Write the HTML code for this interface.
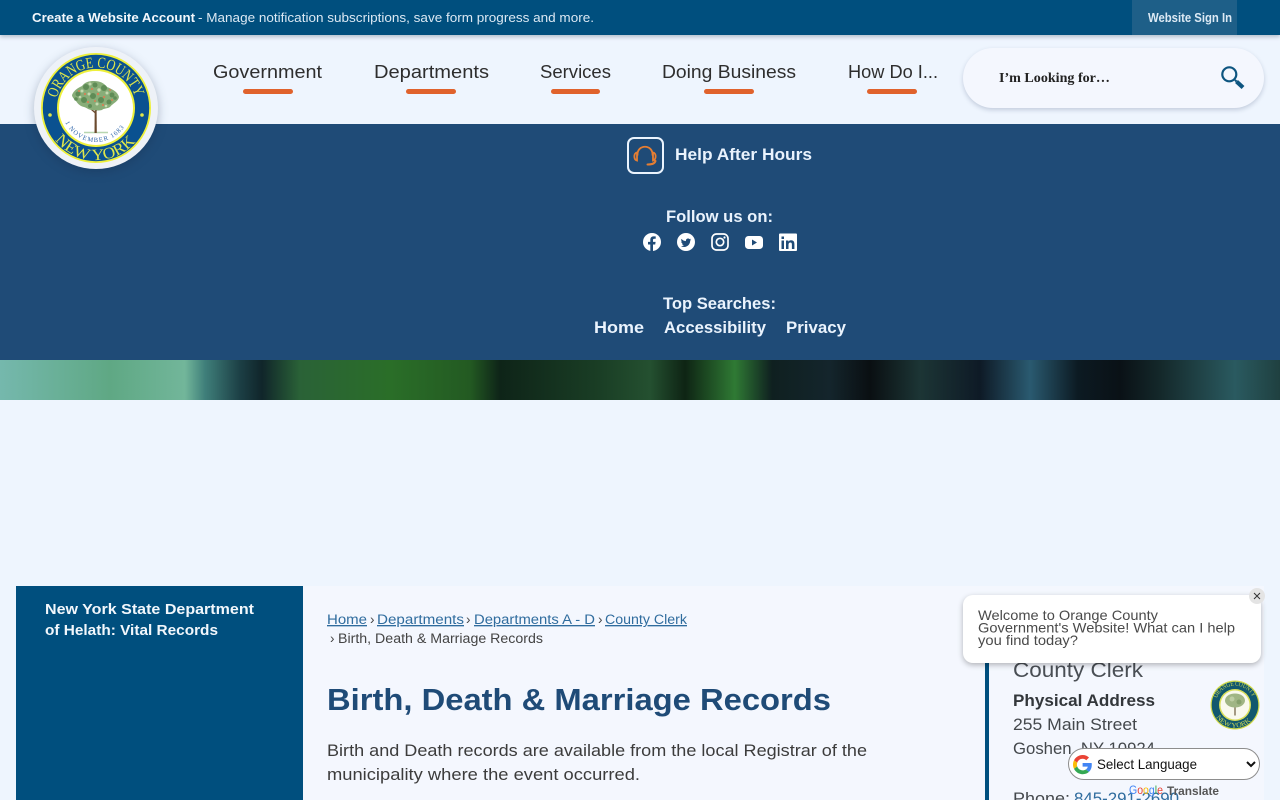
<!DOCTYPE html>
<html lang="en"><head><meta charset="utf-8"><title>Birth, Death &amp; Marriage Records</title>
<style>
html,body{margin:0;padding:0;width:1280px;height:800px;overflow:hidden;background:#eef5fe;font-family:"Liberation Sans",sans-serif}
.b{position:absolute}
svg{position:absolute;left:0;top:0}
text{font-family:"Liberation Sans",sans-serif}
</style></head><body>
<div class="b" style="left:0;top:124px;width:1280px;height:236px;background:#1f4b77"></div>
<div class="b" style="left:0;top:360px;width:1280px;height:40px;background:linear-gradient(90deg,#75b8ad 0,#5fa884 110px,#72b69a 185px,#3f7f7a 205px,#1c3f45 240px,#10252a 262px,#2a6237 300px,#2a6e28 390px,#235a22 470px,#0e2418 500px,#1a3e25 600px,#245030 650px,#0e2414 685px,#2f7a34 735px,#0f2020 772px,#14252c 830px,#0a0f12 870px,#1c3535 920px,#0e1a26 980px,#2a5a70 1030px,#0c1a22 1078px,#0a1116 1120px,#14282a 1160px,#2a5a60 1235px,#1f4040 1280px)"></div>
<div class="b" style="left:0;top:0;width:1280px;height:35px;background:#004f7e;box-shadow:0 2px 4px rgba(0,30,60,.25)"></div>
<div class="b" style="left:1132px;top:0;width:105px;height:35px;background:#1e5f88"></div>
<div class="b" style="left:963px;top:48px;width:301px;height:60px;border-radius:30px;background:#f4f7fe;box-shadow:0 2px 5px rgba(40,60,100,.22)"></div>
<div class="b" style="left:16px;top:586px;width:287px;height:214px;background:#004f7e"></div>
<div class="b" style="left:303px;top:586px;width:961px;height:214px;background:#f4f7fe"></div>
<div class="b" style="left:985px;top:640px;width:4px;height:160px;background:#004f7e"></div>

<svg width="1280" height="800" viewBox="0 0 1280 800">
<defs>
<path id="arcT" d="M56.700 98.200 A40.500 40.500 0 0 1 135.300 98.200"/>
<path id="arcB" d="M55 140 A52 52 0 0 0 137 140"/>
<path id="arcM" d="M65.200 122.400 A34 34 0 0 0 126.800 122.400"/>
<path id="arcS" d="M1217 698 A19.300 19.300 0 0 1 1253 698"/>
<path id="arcSB" d="M1216.100 717.300 A22.500 22.500 0 0 0 1253.900 717.300"/>
</defs>
<text x="32" y="22" font-size="13" font-weight="700" fill="#f2f7fc" textLength="163" lengthAdjust="spacingAndGlyphs">Create a Website Account</text>
<text x="198" y="22" font-size="13" fill="#dbe8f3" textLength="396" lengthAdjust="spacingAndGlyphs">- Manage notification subscriptions, save form progress and more.</text>
<text x="1148" y="22" font-size="13" font-weight="700" fill="#dce9f4" textLength="84" lengthAdjust="spacingAndGlyphs">Website Sign In</text>

<g font-size="18" fill="#2e2e2e">
<text x="213" y="78" textLength="109" lengthAdjust="spacingAndGlyphs">Government</text>
<text x="374" y="78" textLength="115" lengthAdjust="spacingAndGlyphs">Departments</text>
<text x="540" y="78" textLength="71" lengthAdjust="spacingAndGlyphs">Services</text>
<text x="662" y="78" textLength="134" lengthAdjust="spacingAndGlyphs">Doing Business</text>
<text x="848" y="78" textLength="90" lengthAdjust="spacingAndGlyphs">How Do I...</text>
</g>
<g fill="#e0622c">
<rect x="243" y="89" width="50" height="5" rx="2.500"/><rect x="406" y="89" width="50" height="5" rx="2.500"/><rect x="551" y="89" width="49" height="5" rx="2.500"/><rect x="704" y="89" width="50" height="5" rx="2.500"/><rect x="867" y="89" width="50" height="5" rx="2.500"/>
</g>
<text x="999" y="82" font-size="14" font-weight="700" fill="#222" style="font-family:'Liberation Serif',serif" textLength="111" lengthAdjust="spacingAndGlyphs">I’m Looking for…</text>
<g fill="none" stroke="#0d5580"><circle cx="1229.300" cy="74.300" r="7" stroke-width="2.200"/><path d="M1235 80l1.500 1.500" stroke-width="2"/><path d="M1236.500 81.500l6.500 6" stroke-width="4.200"/></g>

<!-- seal -->
<g style="filter:drop-shadow(0 3px 5px rgba(20,40,70,.3))"><ellipse cx="96" cy="108" rx="62" ry="61" fill="#eef2f8"/></g>
<circle cx="96" cy="108" r="55" fill="#eef03a"/>
<circle cx="96" cy="108" r="53.200" fill="#0a5190"/>
<circle cx="96" cy="108" r="39" fill="#eef03a"/>
<circle cx="96" cy="108" r="37" fill="#fff"/>
<text font-size="15.500" fill="#dfe64a" style="font-family:'Liberation Serif',serif"><textPath href="#arcT" textLength="106" lengthAdjust="spacingAndGlyphs">ORANGE COUNTY</textPath></text>
<text font-size="16" fill="#dfe64a" style="font-family:'Liberation Serif',serif"><textPath href="#arcB" textLength="92" lengthAdjust="spacingAndGlyphs">NEW YORK</textPath></text>
<text font-size="6.500" fill="#2a62a8" style="font-family:'Liberation Serif',serif"><textPath href="#arcM" textLength="71" lengthAdjust="spacing">1 NOVEMBER 1683</textPath></text>
<circle cx="50" cy="115" r="1.800" fill="#dfe64a"/><circle cx="142" cy="115" r="1.800" fill="#dfe64a"/>
<path d="M84 132.500h24" stroke="#b7d6b0" stroke-width="1.500"/>
<path d="M95.500 113l-8-7M95.500 111l9-7M95.500 108v-9" fill="none" stroke="#6b4a2e" stroke-width="1.300"/>
<path d="M94.700 108l-.2 25h2.300l-.2-25z" fill="#6b4a2e"/>
<g style="filter:blur(.35px)">
<path d="M72 95c2-5 6-7 10-9 3-4 7-5 12-5 6 0 10 2 13 6 5 2 11 5 12 10-1 5-6 6-9 10-3 2-6 1-8 3-4 1-7 0-10 0-3 0-5-2-8-3-4-1-6-3-8-6-2-2-4-4-4-6z" fill="#88ad78"/>
<g fill="#5f8c56">
<circle cx="78" cy="94" r="2.500"/><circle cx="86" cy="87" r="3"/><circle cx="95" cy="85" r="2.500"/><circle cx="104" cy="88" r="3"/><circle cx="112" cy="95" r="2.500"/><circle cx="84" cy="100" r="3"/><circle cx="93" cy="96" r="3"/><circle cx="101" cy="100" r="3"/><circle cx="109" cy="102" r="2.500"/><circle cx="90" cy="106" r="2"/><circle cx="115" cy="98" r="1.800"/><circle cx="76" cy="99" r="1.800"/></g>
<g fill="#c4dab0">
<circle cx="82" cy="91" r="1.500"/><circle cx="90" cy="84" r="1.500"/><circle cx="99" cy="90" r="1.700"/><circle cx="107" cy="93" r="1.500"/><circle cx="89" cy="94" r="1.500"/><circle cx="80" cy="97" r="1.300"/><circle cx="97" cy="104" r="1.500"/><circle cx="106" cy="106" r="1.300"/></g>
<g fill="#d77f55">
<circle cx="85" cy="94" r="1.100"/><circle cx="92" cy="89" r="1.100"/><circle cx="98" cy="94" r="1.200"/><circle cx="104" cy="97" r="1.100"/><circle cx="110" cy="90" r="1"/><circle cx="88" cy="102" r="1.100"/><circle cx="95" cy="101" r="1"/><circle cx="103" cy="105" r="1.100"/><circle cx="112" cy="100" r="1"/><circle cx="79" cy="91" r="1"/></g>
</g>

<!-- help -->
<rect x="628" y="138" width="35" height="35" rx="6" fill="none" stroke="#eaf3fd" stroke-width="2"/>
<g fill="none" stroke="#e67e32" stroke-width="1.800" stroke-linecap="round"><path d="M637.500 155c-.5-11 15.500-11 15 0"/><path d="M637 152.500c-3.500.5-3.500 7 0 8z"/><path d="M653 152.500c3.500.5 3.500 7 0 8z"/><path d="M655.500 161c-1 3-4 3.500-8 3.500" stroke-width="2"/></g>
<text x="675" y="160" font-size="17" font-weight="700" fill="#eaf3fd" textLength="137" lengthAdjust="spacingAndGlyphs">Help After Hours</text>
<text x="666" y="222" font-size="17" font-weight="700" fill="#eaf3fd" textLength="107" lengthAdjust="spacingAndGlyphs">Follow us on:</text>
<!-- social -->
<circle cx="652" cy="242" r="9" fill="#fff"/><path d="M650.300 251v-6.500h-2.300v-2.600h2.300v-2c0-2.300 1.300-3.500 3.400-3.500h2v2.400h-1.300c-1.100 0-1.400.6-1.400 1.300v1.800h2.600l-.4 2.600h-2.200v6.500z" fill="#1f4b77"/>
<circle cx="686" cy="242" r="9" fill="#fff"/><path transform="translate(680,236.500) scale(.5)" fill="#1f4b77" d="M22.460 6c-.77.35-1.600.58-2.460.69.880-.53 1.560-1.370 1.880-2.380-.83.500-1.750.850-2.720 1.050C18.370 4.500 17.260 4 16 4c-2.350 0-4.270 1.920-4.270 4.290 0 .34.040.67.110.98C8.280 9.090 5.110 7.380 3 4.790c-.37.630-.58 1.370-.58 2.150 0 1.490.750 2.810 1.910 3.560-.71 0-1.370-.2-1.950-.5v.03c0 2.080 1.480 3.820 3.440 4.210a4.220 4.220 0 0 1-1.930.07 4.280 4.280 0 0 0 4 2.980 8.521 8.521 0 0 1-5.330 1.840c-.34 0-.68-.02-1.020-.06C3.440 20.290 5.700 21 8.120 21 16 21 20.330 14.460 20.330 8.790c0-.19 0-.37-.01-.56.840-.6 1.560-1.360 2.140-2.230z"/>
<rect x="712" y="234" width="16" height="16" rx="4.500" fill="none" stroke="#fff" stroke-width="1.700"/><circle cx="720" cy="242" r="3.700" fill="none" stroke="#fff" stroke-width="1.700"/><circle cx="724.500" cy="237.500" r="1.100" fill="#fff"/>
<rect x="745" y="236" width="18" height="13" rx="3.500" fill="#fff"/><path d="M752 239.500v6l5-3z" fill="#1f4b77"/>
<rect x="779" y="233.500" width="18" height="17.500" rx="1" fill="#fff"/><path d="M781.500 240.500h2.500v8.500h-2.500zM781.500 236.500h2.500v2.500h-2.500zM786 240.500h2.400v1.200c.5-.8 1.400-1.400 2.700-1.400 2.300 0 3.300 1.400 3.300 3.800v4.900h-2.500v-4.400c0-1.300-.4-2.100-1.500-2.100s-1.900.8-1.900 2.100v4.400h-2.500z" fill="#1f4b77"/>

<text x="663" y="309" font-size="17" font-weight="700" fill="#eaf3fd" textLength="113" lengthAdjust="spacingAndGlyphs">Top Searches:</text>
<g font-size="17" font-weight="700" fill="#eaf3fd">
<text x="594" y="333" textLength="50" lengthAdjust="spacingAndGlyphs">Home</text>
<text x="664" y="333" textLength="102" lengthAdjust="spacingAndGlyphs">Accessibility</text>
<text x="786" y="333" textLength="60" lengthAdjust="spacingAndGlyphs">Privacy</text>
</g>

<!-- sidebar -->
<g font-size="15" font-weight="700" fill="#f2f7fc">
<text x="45" y="614" textLength="209" lengthAdjust="spacingAndGlyphs">New York State Department</text>
<text x="45" y="635" textLength="173" lengthAdjust="spacingAndGlyphs">of Helath: Vital Records</text>
</g>
<!-- breadcrumb -->
<g font-size="13.500" fill="#2f6c9e" text-decoration="underline">
<text x="327" y="624" textLength="40" lengthAdjust="spacingAndGlyphs">Home</text>
<text x="377" y="624" textLength="87" lengthAdjust="spacingAndGlyphs">Departments</text>
<text x="474" y="624" textLength="121" lengthAdjust="spacingAndGlyphs">Departments A - D</text>
<text x="605" y="624" textLength="82" lengthAdjust="spacingAndGlyphs">County Clerk</text>
</g>
<g font-size="13.500" fill="#444">
<text x="370" y="624">›</text><text x="466" y="624">›</text><text x="598" y="624">›</text>
<text x="330" y="643">›</text>
<text x="338" y="643" textLength="205" lengthAdjust="spacingAndGlyphs">Birth, Death &amp; Marriage Records</text>
</g>
<text x="327" y="710" font-size="31" font-weight="700" fill="#1f4b77" textLength="504" lengthAdjust="spacingAndGlyphs">Birth, Death &amp; Marriage Records</text>
<g font-size="16.500" fill="#3c3c3c">
<text x="327" y="756" textLength="540" lengthAdjust="spacingAndGlyphs">Birth and Death records are available from the local Registrar of the</text>
<text x="327" y="780" textLength="313" lengthAdjust="spacingAndGlyphs">municipality where the event occurred.</text>
</g>
<!-- right col -->
<text x="1013" y="677" font-size="21" fill="#4a4f55" textLength="130" lengthAdjust="spacingAndGlyphs">County Clerk</text>
<text x="1013" y="706" font-size="17" font-weight="700" fill="#33373b" textLength="142" lengthAdjust="spacingAndGlyphs">Physical Address</text>
<g font-size="16.500" fill="#44484c">
<text x="1013" y="730" textLength="124" lengthAdjust="spacingAndGlyphs">255 Main Street</text>
<text x="1013" y="754" textLength="142" lengthAdjust="spacingAndGlyphs">Goshen, NY 10924</text>
<text x="1013" y="804" textLength="57" lengthAdjust="spacingAndGlyphs">Phone:</text>
<text x="1074" y="804" fill="#2f6c9e" textLength="105" lengthAdjust="spacingAndGlyphs">845-291-2690</text>
</g>
<!-- small seal -->
<circle cx="1235" cy="705" r="24.500" fill="#d4dc4a"/><circle cx="1235" cy="705" r="23.300" fill="#12586e"/>
<text font-size="7" fill="#c9d657" style="font-family:'Liberation Serif',serif"><textPath href="#arcS" textLength="45" lengthAdjust="spacingAndGlyphs">ORANGE COUNTY</textPath></text>
<text font-size="7" fill="#c9d657" style="font-family:'Liberation Serif',serif"><textPath href="#arcSB" textLength="40" lengthAdjust="spacingAndGlyphs">NEW YORK</textPath></text>
<circle cx="1235" cy="705" r="16" fill="#d9df5a"/><circle cx="1235" cy="705" r="14.500" fill="#f9f9ee"/>
<path d="M1234.400 703h1.200v12.500h-1.200z" fill="#6b5a3c"/><ellipse cx="1235" cy="700.500" rx="10" ry="7" fill="#a0b584"/><circle cx="1232" cy="699" r="2.500" fill="#bdcda3"/><circle cx="1239" cy="702" r="2.500" fill="#86a06c"/>
</svg>

<!-- chat bubble -->
<div class="b" style="left:963px;top:595px;width:298px;height:68px;background:#fff;border-radius:10px;box-shadow:0 2px 6px rgba(0,0,0,.28)"></div>
<div class="b" style="left:1249px;top:588px;width:16px;height:16px;border-radius:50%;background:#e4e4e4"></div>
<!-- select -->
<div class="b" style="left:1068px;top:748px;width:190px;height:30px;background:#fff;border:1px solid #8d8d8d;border-radius:16px"></div>
<svg width="1280" height="800" viewBox="0 0 1280 800">
<g font-size="14" fill="#4a4a4a">
<text x="978" y="620" textLength="180" lengthAdjust="spacingAndGlyphs">Welcome to Orange County</text>
<text x="978" y="632.500" textLength="257" lengthAdjust="spacingAndGlyphs">Government's Website! What can I help</text>
<text x="978" y="645" textLength="100" lengthAdjust="spacingAndGlyphs">you find today?</text>
</g>
<path d="M1254 593l6 6M1260 593l-6 6" stroke="#333" stroke-width="1"/>
<g transform="translate(1073,755) scale(.4)">
<path fill="#EA4335" d="M24 9.500c3.540 0 6.710 1.220 9.210 3.600l6.850-6.850C35.900 2.380 30.470 0 24 0 14.620 0 6.510 5.380 2.560 13.220l7.980 6.190C12.430 13.720 17.740 9.500 24 9.500z"/>
<path fill="#4285F4" d="M46.980 24.550c0-1.570-.15-3.090-.38-4.550H24v9.020h12.940c-.58 2.960-2.260 5.480-4.780 7.180l7.730 6c4.510-4.180 7.090-10.360 7.090-17.650z"/>
<path fill="#FBBC05" d="M10.530 28.590c-.48-1.450-.76-2.990-.76-4.590s.27-3.140.76-4.590l-7.980-6.190C.92 16.460 0 20.120 0 24c0 3.880.92 7.540 2.560 10.780l7.970-6.190z"/>
<path fill="#34A853" d="M24 48c6.480 0 11.930-2.130 15.890-5.810l-7.730-6c-2.150 1.450-4.920 2.300-8.160 2.300-6.260 0-11.570-4.220-13.470-9.910l-7.980 6.190C6.510 42.620 14.620 48 24 48z"/>
</g>
<text x="1097" y="769" font-size="14" fill="#111" textLength="100" lengthAdjust="spacingAndGlyphs">Select Language</text>
<path d="M1247 762l4 4 4-4" fill="none" stroke="#111" stroke-width="2"/>
<text x="1129" y="794" font-size="12" textLength="34" lengthAdjust="spacingAndGlyphs"><tspan fill="#4285F4">G</tspan><tspan fill="#EA4335">o</tspan><tspan fill="#FBBC05">o</tspan><tspan fill="#4285F4">g</tspan><tspan fill="#34A853">l</tspan><tspan fill="#EA4335">e</tspan></text>
<text x="1167" y="795" font-size="12" font-weight="700" fill="#555" textLength="52" lengthAdjust="spacingAndGlyphs">Translate</text>
</svg>
</body></html>
